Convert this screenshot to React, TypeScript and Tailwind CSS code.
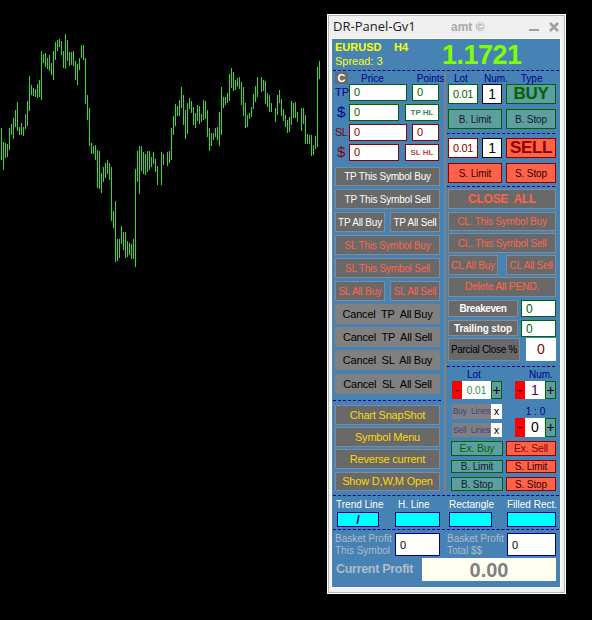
import type { ReactNode } from "react";

// top/bottom of each price bar, measured at 3x, one entry every 2px (null = no bar)
const bars: ([number, number] | null)[] = [
  [295, 392], [337, 420], [340, 385], [343, 382], [295, 360], [282, 315], [265, 327], [240, 290], [217, 303], [292, 315],
  [280, 316], [292, 320], [252, 297], [213, 288], [139, 245], [165, 195], [175, 200], [178, 202], [163, 204], [151, 202],
  [64, 210], [72, 100], [69, 111], [84, 118], [76, 123], [99, 135], [64, 150], [37, 90], [30, 63], [27, 51],
  [33, 75], [64, 114], [12, 117], [30, 93], [66, 108], [66, 105], [64, 110], [94, 150], [102, 165], [84, 120],
  [45, 84], [45, 90], [84, 222], [195, 270], [234, 347], [340, 372], [348, 372], [346, 390], [361, 474], [363, 477],
  [430, 489], [411, 456], [400, 445], [391, 432], [400, 450], [411, 573], [543, 594], [513, 696], [627, 693], [627, 684],
  [588, 642], [606, 660], [606, 684], [633, 681], [640, 675], [642, 687], [627, 688], [417, 711], [363, 456], [348, 492],
  [348, 423], [366, 432], [372, 435], [363, 426], [363, 420], [381, 411], [366, 402], [387, 426], [408, 465], null,
  [366, 465], [372, 405], null, [366, 408], [363, 399], [294, 390], [258, 315], [222, 288], [228, 258], [210, 258],
  [171, 234], [195, 285], [240, 327], [219, 312], [204, 237], [213, 249], [231, 285], [249, 294], [225, 273], [228, 282],
  [252, 276], [210, 270], [213, 267], [240, 321], [294, 363], [309, 348], [309, 330], [294, 321], [291, 330], [246, 348],
  [171, 315], [201, 234], [201, 225], [189, 219], [132, 213], [114, 174], [126, 183], [150, 180], [144, 171], [141, 177],
  [156, 225], [171, 258], [219, 294], [255, 291], [249, 267], [231, 261], [192, 237], [168, 216], [141, 201], null,
  [141, 186], [150, 183], [153, 222], [189, 231], [195, 246], [219, 246], null, [234, 276], [195, 255], [180, 219],
  [207, 258], [237, 273], [255, 291], [270, 309], [261, 306], [213, 285], [219, 264], [216, 264], [246, 276], null,
  [234, 303], [234, 282], [255, 342], [312, 342], [315, 342], [315, 378], [345, 375], [318, 357], [111, 351], [93, 147],
];

function Chart() {
  return (
    <svg width="327" height="620" className="block shrink-0" shapeRendering="crispEdges">
      {bars.map((b, i) =>
        b ? (
          <rect
            key={i}
            x={1 + i * 2}
            y={30 + Math.round(b[0] / 3)}
            width="1"
            height={Math.round((b[1] - b[0]) / 3)}
            fill="#2be310"
          />
        ) : null
      )}
    </svg>
  );
}

function Btn({ className, children }: { className: string; children: ReactNode }) {
  return (
    <div className={`flex shrink-0 items-center justify-center whitespace-pre border ${className}`}>{children}</div>
  );
}

const grey = "border-[#7f8b96] bg-[#696969]";
const teal = "border-[#006400] bg-[#5f9ea0] text-[#10202a]";
const red = "border-[#8b0000] bg-[#ff6347] text-[#300]";

function Dash({ className }: { className: string }) {
  return <div className={`shrink-0 border-t border-dashed border-[#00008b] ${className}`} />;
}

function Input({ className, value }: { className: string; value: string }) {
  return <div className={`flex shrink-0 items-center border bg-white pl-1 ${className}`}>{value}</div>;
}

function Stepper({ className, value, valueClass }: { className: string; value: string; valueClass: string }) {
  return (
    <div className={`flex shrink-0 text-[14px] ${className}`}>
      <div className="flex w-[10px] items-center justify-center bg-[#ff0000] text-black">-</div>
      <div className={`flex flex-1 items-center justify-center bg-white ${valueClass}`}>{value}</div>
      <div className="flex w-[11px] items-center justify-center border border-[#006400] bg-[#5f9ea0] text-black">+</div>
    </div>
  );
}

function LeftColumn() {
  return (
    <div className="ml-[3px] flex w-[105px] shrink-0 flex-col">
      <div className="flex h-[12px] items-center text-[10px] text-[#00008b]">
        <div className="flex h-[12px] w-[13px] shrink-0 items-center justify-center rounded-[1px] bg-[#696969] text-[11px] font-bold text-white">C</div>
        <span className="ml-[13px]">Price</span>
        <span className="ml-[33px]">Points</span>
      </div>
      <div className="flex h-[17px] items-center text-[11px]">
        <span className="w-[14px] text-[#00008b]">TP</span>
        <Input className="h-[17px] w-[58px] border-[#006400] text-[#006400]" value="0" />
        <Input className="ml-[5px] h-[17px] w-[27px] border-[#006400] text-[#006400]" value="0" />
      </div>
      <div className="mt-[3px] flex h-[17px] items-center text-[11px]">
        <span className="w-[14px] pl-[2px] text-[15px] text-[#00008b]">$</span>
        <Input className="h-[17px] w-[50px] border-[#006400] text-[#006400]" value="0" />
        <Btn className="ml-[6px] h-[17px] w-[34px] border-[#006400] bg-white text-[8px] font-bold text-[#2e8b57]">TP HL</Btn>
      </div>
      <div className="mt-[3px] flex h-[17px] items-center text-[11px]">
        <span className="w-[14px] tracking-[-0.5px] text-[#8b0000]">SL</span>
        <Input className="h-[17px] w-[58px] border-[#8b0000] text-[#8b0000]" value="0" />
        <Input className="ml-[5px] h-[17px] w-[27px] border-[#8b0000] text-[#8b0000]" value="0" />
      </div>
      <div className="mt-[3px] flex h-[17px] items-center text-[11px]">
        <span className="w-[14px] pl-[2px] text-[15px] text-[#8b0000]">$</span>
        <Input className="h-[17px] w-[50px] border-[#8b0000] text-[#8b0000]" value="0" />
        <Btn className="ml-[6px] h-[17px] w-[34px] border-[#8b0000] bg-white text-[8px] font-bold text-[#b04a4a]">SL HL</Btn>
      </div>
      <div className="mt-[6px] flex flex-col gap-[3px] text-[10px] tracking-[-0.2px]">
        <Btn className={`h-[19px] text-white ${grey}`}>TP This Symbol Buy</Btn>
        <Btn className={`h-[20px] text-white ${grey}`}>TP This Symbol Sell</Btn>
        <div className="flex justify-between">
          <Btn className={`h-[20px] w-[50px] text-white ${grey}`}>TP All Buy</Btn>
          <Btn className={`h-[20px] w-[50px] text-white ${grey}`}>TP All Sell</Btn>
        </div>
        <Btn className={`h-[20px] text-[#ff6347] ${grey}`}>SL This Symbol Buy</Btn>
        <Btn className={`h-[20px] text-[#ff6347] ${grey}`}>SL This Symbol Sell</Btn>
        <div className="flex justify-between">
          <Btn className={`h-[20px] w-[50px] text-[#ff6347] ${grey}`}>SL All Buy</Btn>
          <Btn className={`h-[20px] w-[50px] text-[#ff6347] ${grey}`}>SL All Sell</Btn>
        </div>
        <Btn className="h-[20px] rounded-[1px] border-[#808080] bg-[#808080] text-[11px] text-black">Cancel  TP  All Buy</Btn>
        <Btn className="h-[20px] rounded-[1px] border-[#808080] bg-[#808080] text-[11px] text-black">Cancel  TP  All Sell</Btn>
        <Btn className="h-[20px] rounded-[1px] border-[#808080] bg-[#808080] text-[11px] text-black">Cancel  SL  All Buy</Btn>
        <Btn className="mt-[1px] h-[20px] rounded-[1px] border-[#808080] bg-[#808080] text-[11px] text-black">Cancel  SL  All Sell</Btn>
      </div>
      <Dash className="-ml-[2px] mt-[6px] w-[108px]" />
      <div className="mt-[4px] flex flex-col gap-[2px] text-[11px] tracking-[-0.2px] text-[#ffd700]">
        <Btn className={`h-[20px] ${grey}`}>Chart SnapShot</Btn>
        <Btn className={`h-[20px] ${grey}`}>Symbol Menu</Btn>
        <Btn className={`h-[20px] ${grey}`}>Reverse current</Btn>
        <Btn className={`mt-[1px] h-[19px] ${grey}`}>Show D,W,M Open</Btn>
      </div>
    </div>
  );
}

function RightColumn() {
  return (
    <div className="ml-[2px] flex w-[108px] shrink-0 flex-col">
      <div className="flex h-[12px] items-center text-[10px] text-[#00008b]">
        <span className="ml-[6px]">Lot</span>
        <span className="ml-[16px]">Num.</span>
        <span className="ml-[13px]">Type</span>
      </div>
      <div className="flex h-[20px] text-[11px] tracking-[-0.3px]">
        <Btn className="h-[20px] w-[30px] border-[#006400] bg-white text-[#006400]">0.01</Btn>
        <Btn className="ml-[4px] h-[20px] w-[20px] border-black bg-white text-[14px] text-black">1</Btn>
        <Btn className="ml-[4px] h-[20px] w-[50px] border-[#006400] bg-[#5f9ea0] text-[17px] font-bold text-[#006400]">BUY</Btn>
      </div>
      <div className="mt-[5px] flex h-[20px] justify-between text-[10px] tracking-[-0.1px]">
        <Btn className={`h-[20px] w-[54px] ${teal}`}>B. Limit</Btn>
        <Btn className={`h-[20px] w-[50px] ${teal}`}>B. Stop</Btn>
      </div>
      <Dash className="-ml-[1px] mt-[4px] w-[108px]" />
      <div className="mt-[4px] flex h-[20px] text-[11px] tracking-[-0.3px]">
        <Btn className="h-[20px] w-[30px] border-[#8b0000] bg-white text-[#8b0000]">0.01</Btn>
        <Btn className="ml-[4px] h-[20px] w-[20px] border-black bg-white text-[14px] text-black">1</Btn>
        <Btn className="ml-[4px] h-[20px] w-[50px] border-[#8b0000] bg-[#ff6347] text-[17px] font-bold text-[#8b0000]">SELL</Btn>
      </div>
      <div className="mt-[5px] flex h-[20px] justify-between text-[10px] tracking-[-0.1px]">
        <Btn className={`h-[20px] w-[54px] ${red}`}>S. Limit</Btn>
        <Btn className={`h-[20px] w-[50px] ${red}`}>S. Stop</Btn>
      </div>
      <Dash className="-ml-[1px] mt-[3px] w-[108px]" />
      <Btn className={`mt-[2px] h-[20px] text-[12px] font-bold tracking-[-0.3px] text-[#ff6347] ${grey}`}>CLOSE  ALL</Btn>
      <Btn className={`mt-[3px] h-[19px] text-[10px] tracking-[-0.2px] text-[#ff6347] ${grey}`}>CL. This Symbol Buy</Btn>
      <Btn className={`mt-[2px] h-[20px] text-[10px] tracking-[-0.2px] text-[#ff6347] ${grey}`}>CL. This Symbol Sell</Btn>
      <div className="mt-[2px] flex justify-between text-[10px] tracking-[-0.2px] text-[#ff6347]">
        <Btn className={`h-[20px] w-[50px] ${grey}`}>CL All Buy</Btn>
        <Btn className={`h-[20px] w-[50px] ${grey}`}>CL All Sell</Btn>
      </div>
      <Btn className={`mt-[2px] h-[20px] text-[10.5px] tracking-[-0.3px] text-[#ff6347] ${grey}`}>Delete All PEND.</Btn>
      <div className="mt-[3px] flex h-[17px] justify-between">
        <Btn className={`h-[17px] w-[70px] text-[10px] font-bold tracking-[-0.4px] text-white ${grey}`}>Breakeven</Btn>
        <Input className="h-[17px] w-[35px] border-[#006400] text-[12px] text-[#006400]" value="0" />
      </div>
      <div className="mt-[3px] flex h-[16px] justify-between">
        <Btn className={`h-[16px] w-[70px] text-[10px] font-bold tracking-[-0.1px] text-white ${grey}`}>Trailing stop</Btn>
        <Input className="h-[17px] w-[35px] border-[#006400] text-[12px] text-[#006400]" value="0" />
      </div>
      <div className="mt-[2px] flex h-[23px] justify-between">
        <Btn className={`h-[23px] w-[72px] text-[10px] tracking-[-0.3px] text-black ${grey}`}>Parcial Close %</Btn>
        <Btn className="h-[23px] w-[30px] border-white bg-white text-[14px] text-[#8b0000]">0</Btn>
      </div>
      <Dash className="-ml-[1px] mt-[5px] w-[108px]" />
      <div className="mt-[2px] flex h-[10px] items-center text-[10px] text-[#00008b]">
        <span className="ml-[19px]">Lot</span>
        <span className="ml-[48px]">Num.</span>
      </div>
      <div className="mt-[2px] flex h-[18px] justify-between pl-[4px]">
        <Stepper className="h-[18px] w-[50px]" value="0.01" valueClass="text-[10px] text-[#2e8b57]" />
        <Stepper className="h-[18px] w-[41px]" value="1" valueClass="text-[#4b0082]" />
      </div>
      <div className="mt-[5px] flex h-[33px] justify-between pl-[4px]">
        <div className="flex w-[50px] flex-col gap-[4px] text-[8.5px] tracking-[-0.2px] text-[#483d8b]">
          <div className="flex h-[15px]">
            <Btn className="h-[15px] w-[39px] border-[#808080] bg-[#808080]">Buy  Lines</Btn>
            <Btn className="h-[15px] w-[11px] border-white bg-white text-[11px] text-black">x</Btn>
          </div>
          <div className="flex h-[14px]">
            <Btn className="h-[14px] w-[39px] border-[#808080] bg-[#808080]">Sell  Lines</Btn>
            <Btn className="h-[14px] w-[11px] border-white bg-white text-[11px] text-black">x</Btn>
          </div>
        </div>
        <div className="flex w-[41px] flex-col">
          <div className="flex h-[14px] items-center justify-center text-[10px] text-[#00008b]">1 : 0</div>
          <Stepper className="h-[19px] w-[41px]" value="0" valueClass="text-black" />
        </div>
      </div>
      <div className="mt-[4px] flex h-[15px] justify-between pl-[3px] text-[10.5px] tracking-[-0.2px]">
        <Btn className="h-[15px] w-[52px] border-[#006400] bg-[#5f9ea0] text-[#006400]">Ex. Buy</Btn>
        <Btn className="h-[15px] w-[50px] border-[#8b0000] bg-[#ff6347] text-[#8b0000]">Ex. Sell</Btn>
      </div>
      <div className="mt-[4px] flex h-[13px] justify-between pl-[3px] text-[10px] tracking-[-0.1px]">
        <Btn className={`h-[13px] w-[52px] ${teal}`}>B. Limit</Btn>
        <Btn className={`h-[13px] w-[50px] ${red}`}>S. Limit</Btn>
      </div>
      <div className="mt-[4px] flex h-[14px] justify-between pl-[3px] text-[10px] tracking-[-0.1px]">
        <Btn className={`h-[14px] w-[52px] ${teal}`}>B. Stop</Btn>
        <Btn className={`h-[14px] w-[50px] ${red}`}>S. Stop</Btn>
      </div>
    </div>
  );
}

export default function App() {
  return (
    <div className="flex h-[620px] w-[592px] overflow-hidden bg-black font-['Liberation_Sans',Arial,sans-serif]">
      <Chart />
      <div className="mt-[14px] h-[580px] w-[239px] shrink-0 border border-white">
        <div className="flex h-[578px] flex-col border border-[#b4b4b4] bg-[#f0f0f0]">
          <div className="flex h-[22px] shrink-0 items-center pl-[4px]">
            <span className="w-[118px] font-['Open_Sans',sans-serif] text-[13px] text-[#222]">DR-Panel-Gv1</span>
            <span className="w-[33px] whitespace-nowrap text-[12px] font-bold text-[#a8a8a8]">amt ©</span>
            <div className="ml-[45px] mt-[5px] h-[2px] w-[10px] bg-[#a0a0a0]" />
            <svg width="10" height="10" viewBox="0 0 10 10" className="ml-[10px]">
              <path d="M1 1L9 9M9 1L1 9" stroke="#a0a0a0" strokeWidth="2.6" />
            </svg>
          </div>
          <div className="ml-[2px] h-[550px] w-[230px] shrink-0 border border-white">
            <div className="flex h-[548px] flex-col bg-[#4682b4]">
              <div className="flex h-[31px] shrink-0 pl-[3px]">
                <div className="w-[107px] pt-[1px] text-[11px] leading-[14px] text-[#ffff00]">
                  <div className="flex font-bold">
                    <span className="w-[59px]">EURUSD</span>
                    <span>H4</span>
                  </div>
                  <div>Spread: 3</div>
                </div>
                <div className="text-[27px] font-bold leading-[32px] tracking-[-0.5px] text-[#7fff00]">1.1721</div>
              </div>
              <Dash className="mx-[1px]" />
              <div className="mt-[1px] flex h-[423px] shrink-0">
                <LeftColumn />
                <div className="ml-[4px] h-[421px] w-[2px] shrink-0 bg-[#808080]" />
                <RightColumn />
              </div>
              <Dash className="mx-[1px]" />
              <div className="flex h-[16px] shrink-0 items-center whitespace-nowrap text-[10px] text-white">
                <span className="ml-[4px] w-[62px]">Trend Line</span>
                <span className="w-[51px]">H. Line</span>
                <span className="w-[58px]">Rectangle</span>
                <span>Filled Rect.</span>
              </div>
              <div className="flex h-[15px] shrink-0">
                <div className="ml-[5px] flex h-[15px] w-[42px] items-center justify-center border border-[#00008b] bg-[#00ffff] text-[13px] font-bold text-[#00008b]">/</div>
                <div className="ml-[16px] h-[15px] w-[45px] border border-[#00008b] bg-[#00ffff]" />
                <div className="ml-[9px] h-[15px] w-[43px] border border-[#00008b] bg-[#00ffff]" />
                <div className="ml-[15px] h-[15px] w-[49px] border border-[#00008b] bg-[#00ffff]" />
              </div>
              <Dash className="mx-[1px] mt-[2px]" />
              <div className="mt-[3px] flex h-[23px] shrink-0 whitespace-nowrap text-[10px] leading-[12px] text-[#b0bcc8]">
                <div className="ml-[3px] w-[60px]">
                  <div>Basket Profit</div>
                  <div>This Symbol</div>
                </div>
                <Input className="h-[23px] w-[45px] border-[#00008b] text-[11px] text-black" value="0" />
                <div className="ml-[7px] w-[60px]">
                  <div>Basket Profit</div>
                  <div>Total $$</div>
                </div>
                <Input className="h-[23px] w-[49px] border-[#00008b] text-[11px] text-black" value="0" />
              </div>
              <div className="mt-[2px] flex h-[23px] shrink-0 items-center">
                <span className="ml-[4px] w-[86px] whitespace-nowrap text-[12.5px] font-bold tracking-[-0.3px] text-[#b0bcc8]">Current Profit</span>
                <div className="flex h-[23px] w-[134px] items-center justify-center bg-[#fffff0] text-[20px] font-bold text-[#808080]">0.00</div>
              </div>
            </div>
          </div>
        </div>
      </div>
    </div>
  );
}
